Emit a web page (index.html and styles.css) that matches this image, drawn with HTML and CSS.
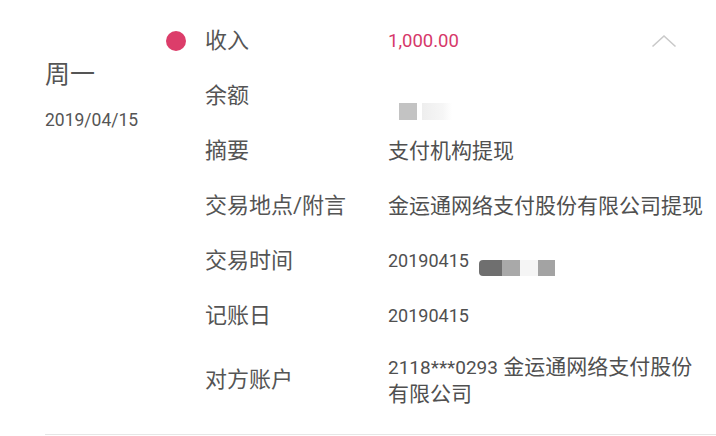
FILE: index.html
```html
<!DOCTYPE html>
<html lang="zh">
<head>
<meta charset="utf-8">
<link rel="stylesheet" href="styles.css">
</head>
<body>
<div class="record">
  <div class="date-col">
    <div class="weekday">周一</div>
    <div class="date">2019/04/15</div>
  </div>
  <div class="details">
    <div class="row">
      <div class="marker"><span class="dot"></span></div>
      <div class="label">收入</div>
      <div class="value amount"><span class="num amt">1,000.00</span></div>
      <svg class="chevron" width="26" height="14" viewBox="0 0 26 14"><polyline points="1.5,12.5 13,2 24.5,12.5" fill="none" stroke="#c9c9c9" stroke-width="1.6"/></svg>
    </div>
    <div class="row">
      <div class="marker"></div>
      <div class="label">余额</div>
      <div class="value"><span class="blur-bal"><span class="b1"></span><span class="b2"></span></span></div>
    </div>
    <div class="row">
      <div class="marker"></div>
      <div class="label">摘要</div>
      <div class="value">支付机构提现</div>
    </div>
    <div class="row">
      <div class="marker"></div>
      <div class="label">交易地点/附言</div>
      <div class="value">金运通网络支付股份有限公司提现</div>
    </div>
    <div class="row">
      <div class="marker"></div>
      <div class="label">交易时间</div>
      <div class="value"><span class="num">20190415</span><span class="blur-time"><span class="t1"></span><span class="t2"></span><span class="t3"></span><span class="t4"></span></span></div>
    </div>
    <div class="row">
      <div class="marker"></div>
      <div class="label">记账日</div>
      <div class="value"><span class="num">20190415</span></div>
    </div>
    <div class="row tall">
      <div class="marker"></div>
      <div class="label">对方账户</div>
      <div class="value multi"><span class="num">2118***0293</span> 金运通网络支付股份<br>有限公司</div>
    </div>
  </div>
</div>
<div class="divider"></div>
</body>
</html>
```

FILE: styles.css
```css
html, body {
  margin: 0;
  padding: 0;
  background: #ffffff;
}
body {
  width: 716px;
  height: 436px;
  overflow: hidden;
  font-family: Roboto, "Noto Sans CJK SC", sans-serif;
  color: #585858;
}
.record {
  display: flex;
}
.date-col {
  width: 121px;
  padding-left: 45px;
  padding-top: 60px;
}
.weekday {
  font-size: 25px;
  line-height: 30px;
  color: #555555;
}
.date {
  margin-top: 19px;
  font-size: 17.5px;
  line-height: 22px;
  color: #555555;
}
.details {
  flex: 1;
  display: flex;
  flex-direction: column;
  padding-top: 13px;
}
.row {
  display: flex;
  align-items: center;
  height: 55px;
}
.row.tall {
  height: 74px;
}
.marker {
  width: 39px;
  flex: none;
  display: flex;
  align-items: center;
}
.dot {
  width: 20px;
  height: 20px;
  border-radius: 50%;
  background: #dc3d6a;
}
.label {
  width: 183px;
  flex: none;
  font-size: 22px;
  line-height: 30px;
  color: #555555;
}
.value {
  flex: 1;
  display: flex;
  align-items: center;
  font-size: 21px;
  line-height: 30px;
  color: #505050;
  white-space: nowrap;
}
.value.multi {
  display: block;
  line-height: 26px;
  font-size: 21px;
}
.num {
  font-size: 18px;
}
.num.amt {
  font-size: 18.5px;
}
.multi .num {
  font-size: 19px;
}
.amount {
  color: #d6386a;
}
.chevron {
  flex: none;
  margin-right: 39px;
}
.blur-bal {
  display: flex;
  margin-top: 31px;
  margin-left: 11px;
}
.blur-bal .b1 {
  width: 18px;
  height: 17px;
  background: #c3c3c3;
}
.blur-bal .b2 {
  width: 30px;
  height: 17px;
  margin-left: 5px;
  background: linear-gradient(90deg, #eeeeee, #f6f6f6 70%, #ffffff);
}
.blur-time {
  display: flex;
  margin-top: 15px;
  margin-left: 10px;
}
.blur-time span {
  height: 16px;
}
.blur-time .t1 {
  width: 23px;
  background: #6f6f6f;
  border-radius: 4px 0 0 4px;
}
.blur-time .t2 {
  width: 18px;
  background: #a9a9a9;
}
.blur-time .t3 {
  width: 18px;
  background: #f5f5f5;
}
.blur-time .t4 {
  width: 17px;
  background: #a3a3a3;
}
.divider {
  margin-top: 17px;
  margin-left: 45px;
  height: 1px;
  background: #e6e6e6;
}
```
